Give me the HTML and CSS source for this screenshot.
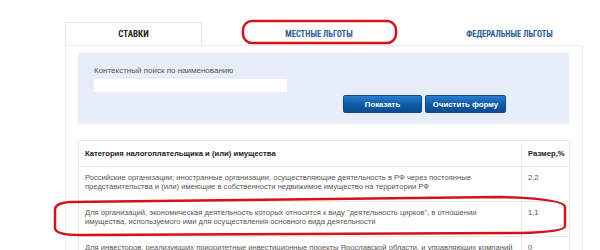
FILE: index.html
```html
<!DOCTYPE html>
<html lang="ru">
<head>
<meta charset="utf-8">
<title>Ставки</title>
<link rel="stylesheet" href="styles.css">
</head>
<body>
<div class="page">
  <div class="tabs">
    <div class="tab tab-active">СТАВКИ</div>
    <div class="tab tab-link">МЕСТНЫЕ ЛЬГОТЫ</div>
    <div class="tab tab-link">ФЕДЕРАЛЬНЫЕ ЛЬГОТЫ</div>
  </div>
  <div class="panel">
    <div class="search">
      <div class="search-label">Контекстный поиск по наименованию</div>
      <div class="search-input"></div>
      <div class="search-buttons">
        <button class="btn btn-show">Показать</button>
        <button class="btn btn-clear">Очистить форму</button>
      </div>
    </div>
    <table class="rates">
      <colgroup><col class="col-name"><col class="col-val"></colgroup>
      <thead>
        <tr><th>Категория налогоплательщика и (или) имущества</th><th>Размер,%</th></tr>
      </thead>
      <tbody>
        <tr><td>Российские организации; иностранные организации, осуществляющие деятельность в РФ через постоянные<br>представительства и (или) имеющие в собственности недвижимое имущество на территории РФ</td><td>2,2</td></tr>
        <tr><td>Для организаций, экономическая деятельность которых относится к виду "деятельность цирков", в отношении<br>имущества, используемого ими для осуществления основного вида деятельности</td><td>1,1</td></tr>
        <tr><td>Для инвесторов, реализующих приоритетные инвестиционные проекты Ярославской области, и управляющих компаний</td><td>0</td></tr>
      </tbody>
    </table>
  </div>
</div>
<svg class="marks" width="600" height="250" viewBox="0 0 600 250">
  <rect x="243" y="21" width="153" height="22" rx="9" ry="9" fill="none" stroke="#d3121c" stroke-width="2.5"/>
  <path d="M 70 202 L 500 197 Q 565 199 565 207 L 565 226 Q 565 232 520 233 L 80 235 Q 55 235 55 228 L 55 210 Q 55 203 70 202 Z" fill="none" stroke="#d3121c" stroke-width="2.5"/>
</svg>
</body>
</html>
```
FILE: styles.css
```css
html, body {
  margin: 0;
  padding: 0;
  background: #ffffff;
  width: 600px;
  height: 250px;
  overflow: hidden;
  position: relative;
}

.page {
  padding: 22px 0 0 65px;
  width: 518px;
  font-family: "Liberation Sans", Arial, sans-serif;
}

.tabs {
  display: grid;
  grid-template-columns: 137px 234px 1fr;
  height: 23px;
  font-family: "Liberation Sans Narrow", "Roboto Condensed", "DejaVu Sans Condensed", "Liberation Sans", sans-serif;
  font-weight: bold;
  font-size: 8.5px;
}

.tab {
  display: flex;
  align-items: center;
  justify-content: center;
  position: relative;
}

.tab-active {
  color: #222222;
  background: #ffffff;
  border: 1px solid #e6e6e6;
  border-bottom: none;
  height: 23px;
  box-sizing: border-box;
  margin-bottom: -1px;
  z-index: 1;
  font-size: 9px;
}

.tab-link {
  color: #2c5c95;
}

.panel {
  border: 1px solid #ebebeb;
  border-bottom: none;
  padding: 7px 13px 0 12px;
  height: 205px;
  box-sizing: border-box;
  overflow: hidden;
}

.search {
  background: #e7eef9;
  height: 71px;
  box-sizing: border-box;
  padding: 13px 63px 0 16px;
}

.search-label {
  font-size: 8px;
  line-height: 10px;
  color: #555555;
}

.search-input {
  margin-top: 3px;
  width: 193px;
  height: 13px;
  background: #ffffff;
}

.search-buttons {
  display: flex;
  justify-content: flex-end;
  gap: 3px;
  margin-top: 3px;
}

.btn {
  height: 18px;
  border: 1px solid #0b4a8c;
  border-radius: 2px;
  background: linear-gradient(#2a7dd0, #0e5aa5 55%, #0b4c92);
  color: #ffffff;
  font-family: "Liberation Sans", Arial, sans-serif;
  font-weight: bold;
  font-size: 7.8px;
  padding: 0;
  box-sizing: border-box;
}

.btn-show { width: 79px; }
.btn-clear { width: 81px; }

.rates {
  margin-top: 16px;
  width: 491px;
  border-collapse: collapse;
  table-layout: fixed;
  font-size: 7.6px;
  line-height: 9px;
  color: #555555;
}

.col-name { width: 443px; }
.col-val { width: 48px; }

.rates th, .rates td {
  border: 1px solid #e8e8e8;
  text-align: left;
  vertical-align: top;
  white-space: nowrap;
  overflow: hidden;
  padding: 0 6px;
}

.rates th {
  color: #222222;
  font-weight: bold;
  font-size: 7.7px;
  padding-top: 8px;
  padding-bottom: 8px;
}

.rates td {
  padding-top: 6px;
  padding-bottom: 10px;
}

.marks {
  position: absolute;
  left: 0;
  top: 0;
  pointer-events: none;
}
```
